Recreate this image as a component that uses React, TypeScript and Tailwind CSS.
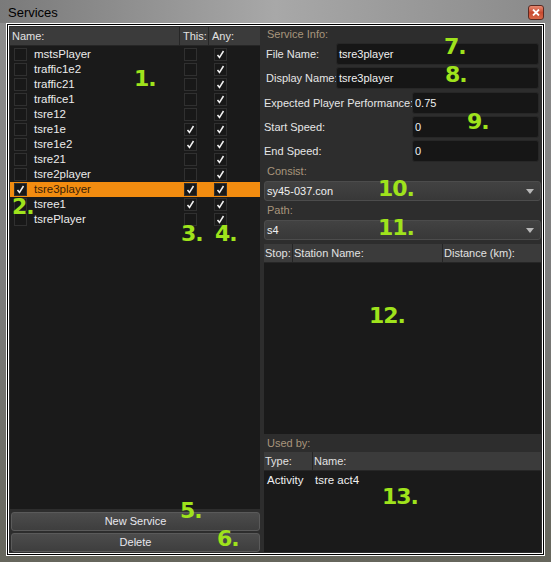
import type { ReactNode } from "react";

const services = [
  { name: "mstsPlayer", self: false, any: true },
  { name: "traffic1e2", self: false, any: true },
  { name: "traffic21", self: false, any: true },
  { name: "traffice1", self: false, any: true },
  { name: "tsre12", self: false, any: true },
  { name: "tsre1e", self: true, any: true },
  { name: "tsre1e2", self: true, any: true },
  { name: "tsre21", self: false, any: true },
  { name: "tsre2player", self: false, any: true },
  { name: "tsre3player", self: true, any: true, selected: true },
  { name: "tsree1", self: true, any: true },
  { name: "tsrePlayer", self: false, any: true },
];

// hand drawn markers on top of the screenshot
const marks = [
  { text: "1.", x: 134, y: 68 },
  { text: "2.", x: 12, y: 196 },
  { text: "3.", x: 181, y: 223 },
  { text: "4.", x: 215, y: 223 },
  { text: "5.", x: 180, y: 500 },
  { text: "6.", x: 217, y: 528 },
  { text: "7.", x: 444, y: 36 },
  { text: "8.", x: 445, y: 64 },
  { text: "9.", x: 467, y: 111 },
  { text: "10.", x: 378, y: 178 },
  { text: "11.", x: 378, y: 217 },
  { text: "12.", x: 369, y: 305 },
  { text: "13.", x: 382, y: 486 },
];

function Check({ on }: { on: boolean }) {
  return (
    <div className="w-[13px] h-[13px] shrink-0 bg-[#181818] border border-[#303030] flex items-center justify-center">
      {on && (
        <svg width="9" height="9" viewBox="0 0 9 9">
          <path d="M1.5 5 L3.5 7.5 L7.5 1" fill="none" stroke="#f2f2f2" strokeWidth="1.5" />
        </svg>
      )}
    </div>
  );
}

function Field({ label, value, labelW, pl }: { label: string; value: string; labelW: string; pl: string }) {
  return (
    <div className={`flex items-center h-[22px] ${pl}`}>
      <div className={`${labelW} shrink-0 whitespace-nowrap text-[#e6e6e6]`}>{label}</div>
      <div className="flex-1 h-full mr-[2px] bg-[#161616] border border-[#272727] rounded-[3px] flex items-center pl-[2px] text-[#f0f0f0]">
        {value}
      </div>
    </div>
  );
}

function Combo({ value }: { value: string }) {
  return (
    <div className="h-[20px] bg-gradient-to-b from-[#424242] to-[#383838] border border-[#4c4c4c] rounded-[3px] flex items-center justify-between pl-[2px] pr-[6px] text-[#f0f0f0]">
      <span>{value}</span>
      <svg width="8" height="5" viewBox="0 0 8 5">
        <path d="M0 0 H8 L4 5 Z" fill="#b8b8b8" />
      </svg>
    </div>
  );
}

function Section({ children, h }: { children: ReactNode; h: string }) {
  return <div className={`${h} flex items-center pl-[3px] text-[#a8957c]`}>{children}</div>;
}

function HeadCell({ children, w }: { children?: ReactNode; w: string }) {
  return (
    <div className={`${w} h-full flex items-center pl-[1px] border-r border-[#262626] text-[#e2e2e2] whitespace-nowrap last:border-r-0`}>
      {children}
    </div>
  );
}

export default function App() {
  return (
    <div className="relative w-[551px] h-[562px] overflow-hidden bg-gradient-to-b from-[#8e8e8e] via-[#7c7c7c] to-[#66665c] font-['Liberation_Sans',Arial,sans-serif] text-[11px] leading-none">
      {/* title bar */}
      <div className="h-[23px] flex items-start justify-between pl-[8px] pr-[7px] bg-gradient-to-r from-[#7a7a7a] via-[#a8a8a8] to-[#8a8a8a]">
        <span className="mt-[6px] text-[13px] text-black">Services</span>
        <div className="mt-[5px] w-[16px] h-[15px] rounded-[3px] border border-[#5a2a22] bg-gradient-to-b from-[#e88a72] via-[#c84a30] to-[#d86848] flex items-center justify-center">
          <svg width="8" height="7" viewBox="0 0 8 7">
            <path d="M1 0.5 L7 6.5 M7 0.5 L1 6.5" stroke="#ffffff" strokeWidth="1.8" />
          </svg>
        </div>
      </div>

      {/* window frame */}
      <div className="mx-[6px] border border-white">
        <div className="border border-black">
          <div className="border border-white">
            <div className="h-[527px] bg-[#2d2d2d] flex">
              {/* left: service list */}
              <div className="w-[251px] flex flex-col pl-[1px] pt-[1px]">
                <div className="flex-1 bg-[#1a1a1a] flex flex-col">
                  <div className="h-[19px] flex bg-[#3b3b3b] border-b border-[#262626]">
                    <HeadCell w="w-[170px]">
                      <span className="pl-[1px]">Name:</span>
                    </HeadCell>
                    <HeadCell w="w-[29px]">
                      <span className="pl-[2px]">This:</span>
                    </HeadCell>
                    <HeadCell w="flex-1">
                      <span className="pl-[2px]">Any:</span>
                    </HeadCell>
                  </div>
                  <div className="pt-[1px]">
                    {services.map((s) => (
                      <div
                        key={s.name}
                        className={`h-[15px] flex items-center ${s.selected ? "bg-[#f28c10] text-[#3a2206]" : "text-[#ececec]"}`}
                      >
                        <div className="w-[170px] flex items-center pl-[4px] gap-[7px]">
                          <Check on={!!s.selected} />
                          <span className="text-[11.5px]">{s.name}</span>
                        </div>
                        <div className="w-[29px] pl-[4px]">
                          <Check on={s.self} />
                        </div>
                        <div className="flex-1 pl-[5px]">
                          <Check on={s.any} />
                        </div>
                      </div>
                    ))}
                  </div>
                </div>
                <div className="mt-[3px] flex flex-col gap-[2px] pl-[1px] pb-[1px]">
                  <button className="h-[19px] rounded-[3px] border border-[#5a5a5a] bg-gradient-to-b from-[#4c4c4c] to-[#3e3e3e] text-[#e8e8ee]">
                    New Service
                  </button>
                  <button className="h-[19px] rounded-[3px] border border-[#5a5a5a] bg-gradient-to-b from-[#4c4c4c] to-[#3e3e3e] text-[#e8e8ee]">
                    Delete
                  </button>
                </div>
              </div>

              {/* right: service info */}
              <div className="flex-1 ml-[2px] pl-[2px] pr-[1px] flex flex-col">
                <Section h="h-[17px]">Service Info:</Section>
                <div className="flex flex-col gap-[2px]">
                  <Field label="File Name:" value="tsre3player" labelW="w-[70px]" pl="pl-[2px]" />
                  <Field label="Display Name:" value="tsre3player" labelW="w-[70px]" pl="pl-[2px]" />
                </div>
                <div className="flex flex-col gap-[2px] mt-[3px]">
                  <Field label="Expected Player Performance:" value="0.75" labelW="w-[148px]" pl="pl-0" />
                  <Field label="Start Speed:" value="0" labelW="w-[148px]" pl="pl-0" />
                  <Field label="End Speed:" value="0" labelW="w-[148px]" pl="pl-0" />
                </div>
                <Section h="h-[19px]">Consist:</Section>
                <Combo value="sy45-037.con" />
                <Section h="h-[19px]">Path:</Section>
                <Combo value="s4" />

                <div className="mt-[4px] h-[190px] bg-[#1a1a1a] flex flex-col">
                  <div className="h-[19px] flex bg-[#3b3b3b] border-b border-[#262626]">
                    <HeadCell w="w-[29px]">Stop:</HeadCell>
                    <HeadCell w="w-[150px]">Station Name:</HeadCell>
                    <HeadCell w="flex-1">Distance (km):</HeadCell>
                  </div>
                </div>

                <Section h="h-[18px]">Used by:</Section>
                <div className="flex-1 mb-[1px] bg-[#1a1a1a] flex flex-col">
                  <div className="h-[19px] flex bg-[#3b3b3b] border-b border-[#262626]">
                    <HeadCell w="w-[49px]">Type:</HeadCell>
                    <HeadCell w="flex-1">Name:</HeadCell>
                  </div>
                  <div className="h-[20px] flex items-center text-[#f0f0f0] text-[11.5px]">
                    <span className="w-[51px] pl-[3px]">Activity</span>
                    <span>tsre act4</span>
                  </div>
                </div>
              </div>
            </div>
          </div>
        </div>
      </div>

      {marks.map((m) => (
        <span
          key={m.text}
          className="absolute text-[22px] font-bold text-[#9fe31c] font-['DejaVu_Sans',sans-serif] tracking-[-1px]"
          style={{ left: m.x, top: m.y }}
        >
          {m.text}
        </span>
      ))}
    </div>
  );
}
